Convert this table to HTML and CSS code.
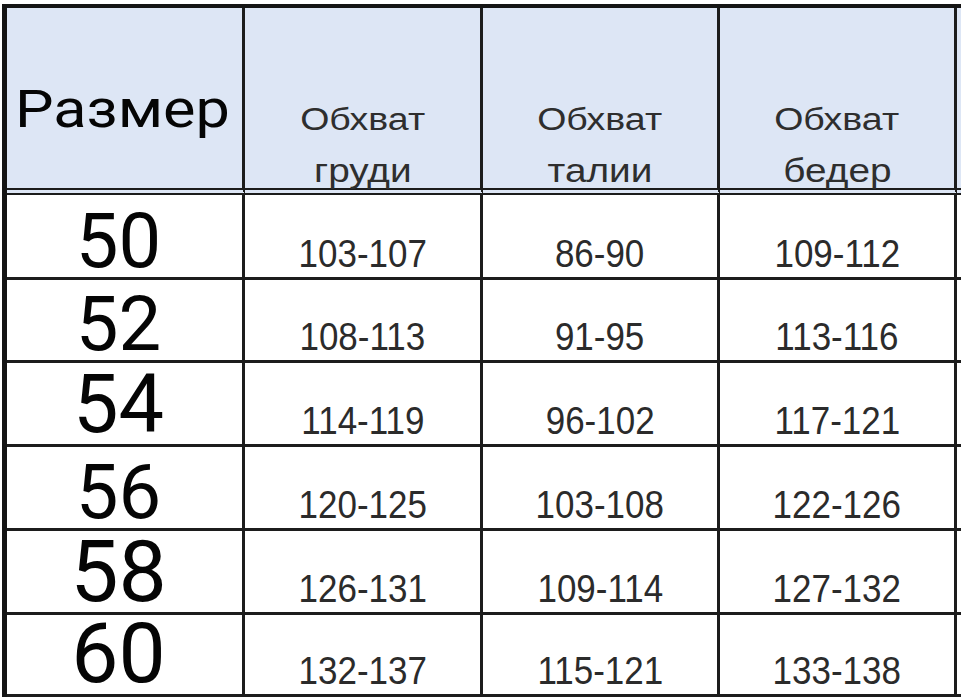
FILE: index.html
```html
<!DOCTYPE html>
<html lang="ru">
<head>
<meta charset="utf-8">
<title>Размер</title>
<link rel="stylesheet" href="styles.css">
</head>
<body>
<div class="sheet">
  <div class="cell head size-head"><span class="size-title">Размер</span></div>
  <div class="cell head measure"><span class="l1">Обхват</span><span class="l2">груди</span></div>
  <div class="cell head measure"><span class="l1">Обхват</span><span class="l2">талии</span></div>
  <div class="cell head measure"><span class="l1">Обхват</span><span class="l2">бедер</span></div>
  <div class="cell head extra"></div>

  <div class="cell size"><span class="num n-a">50</span></div>
  <div class="cell data"><span>103-107</span></div>
  <div class="cell data"><span>86-90</span></div>
  <div class="cell data"><span>109-112</span></div>
  <div class="cell extra"></div>

  <div class="cell size"><span class="num n-a">52</span></div>
  <div class="cell data"><span>108-113</span></div>
  <div class="cell data"><span>91-95</span></div>
  <div class="cell data"><span>113-116</span></div>
  <div class="cell extra"></div>

  <div class="cell size"><span class="num n-b">54</span></div>
  <div class="cell data"><span>114-119</span></div>
  <div class="cell data"><span>96-102</span></div>
  <div class="cell data"><span>117-121</span></div>
  <div class="cell extra"></div>

  <div class="cell size"><span class="num n-a">56</span></div>
  <div class="cell data"><span>120-125</span></div>
  <div class="cell data"><span>103-108</span></div>
  <div class="cell data"><span>122-126</span></div>
  <div class="cell extra"></div>

  <div class="cell size"><span class="num n-c">58</span></div>
  <div class="cell data"><span>126-131</span></div>
  <div class="cell data"><span>109-114</span></div>
  <div class="cell data"><span>127-132</span></div>
  <div class="cell extra"></div>

  <div class="cell size"><span class="num n-d">60</span></div>
  <div class="cell data"><span>132-137</span></div>
  <div class="cell data"><span>115-121</span></div>
  <div class="cell data"><span>133-138</span></div>
  <div class="cell extra"></div>
</div>
</body>
</html>
```

FILE: styles.css
```css
html, body {
  margin: 0;
  padding: 0;
  background: #ffffff;
  overflow: hidden;
}

body {
  width: 961px;
  height: 699px;
}

.sheet {
  display: grid;
  grid-template-columns: 238px 238px 237px 237px 60px;
  grid-template-rows: 187px 85px 83px 84px 84px 84px 82px;
  margin: 4px 0 0 2px;
  border-top: 4px solid #141414;
  border-left: 5px solid #141414;
  width: max-content;
}

.cell {
  box-sizing: border-box;
  border-right: 3px solid #1c1c1c;
  border-bottom: 3px solid #1c1c1c;
  background: #ffffff;
  display: flex;
  justify-content: center;
  min-width: 0;
}

.head {
  background: #dde6f5;
  border-bottom: 7px double #1c1c1c;
}

.size-head {
  justify-content: flex-start;
  align-items: flex-start;
  padding: 76px 0 0 8px;
}

.size-title {
  font-family: Roboto, "Liberation Sans", sans-serif;
  font-size: 51px;
  line-height: 1;
  color: #050505;
  transform: scaleX(1.2);
  transform-origin: left center;
}

.measure {
  flex-direction: column;
  align-items: center;
  justify-content: flex-end;
  gap: 18px;
  padding-bottom: 1px;
  font-family: "Liberation Sans", Arial, sans-serif;
  color: #2e2e2e;
}

.l1 {
  font-size: 31px;
  line-height: 1;
  transform: scaleX(1.21);
}

.l2 {
  font-size: 34px;
  line-height: 1;
  transform: scaleX(1.14);
}

.size {
  align-items: flex-end;
  padding: 0 12px 2px 0;
}

.num {
  font-family: Roboto, "Liberation Sans", sans-serif;
  line-height: 0.9;
  color: #050505;
}

.n-a {
  font-size: 76px;
}

.n-b {
  font-size: 81px;
}

.n-c {
  font-size: 86px;
}

.n-d {
  font-size: 84px;
}

.data {
  align-items: flex-end;
  padding-bottom: 4px;
  font-family: "Liberation Sans", Arial, sans-serif;
  font-size: 38px;
  line-height: 1;
  color: #2b2b2b;
}

.data span {
  transform: scaleX(0.92);
}

.extra {
  border-right: none;
}
```
